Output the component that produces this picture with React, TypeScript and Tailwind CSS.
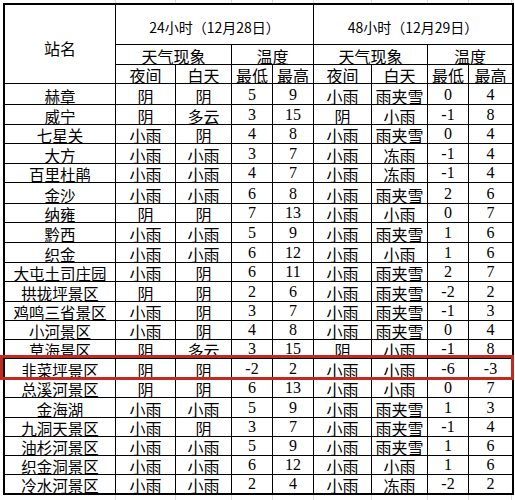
const cols = "grid-cols-[111px_60px_56px_41px_41px_58px_56px_41px_43px]";
const gridCols = ["w-[111px]", "w-[60px]", "w-[56px]", "w-[41px]", "w-[41px]", "w-[58px]", "w-[56px]", "w-[41px]", "w-[43px]"];

// name, night, day, low, high, night, day, low, high, row height
const rows: string[][] = [
  ["赫章", "阴", "阴", "5", "9", "小雨", "雨夹雪", "0", "4", "h-[21px]"],
  ["威宁", "阴", "多云", "3", "15", "阴", "小雨", "-1", "8", "h-[20px]"],
  ["七星关", "小雨", "阴", "4", "8", "小雨", "雨夹雪", "0", "4", "h-[19px]"],
  ["大方", "小雨", "小雨", "3", "7", "小雨", "冻雨", "-1", "4", "h-[20px]"],
  ["百里杜鹃", "小雨", "小雨", "4", "7", "小雨", "冻雨", "-1", "4", "h-[19px]"],
  ["金沙", "小雨", "小雨", "6", "8", "小雨", "雨夹雪", "2", "6", "h-[21px]"],
  ["纳雍", "阴", "阴", "7", "13", "小雨", "小雨", "0", "7", "h-[19px]"],
  ["黔西", "小雨", "小雨", "5", "9", "小雨", "雨夹雪", "1", "6", "h-[20px]"],
  ["织金", "小雨", "小雨", "6", "12", "小雨", "小雨", "1", "6", "h-[20px]"],
  ["大屯土司庄园", "小雨", "阴", "6", "11", "小雨", "雨夹雪", "2", "7", "h-[19px]"],
  ["拱拢坪景区", "阴", "阴", "2", "6", "小雨", "雨夹雪", "-2", "2", "h-[20px]"],
  ["鸡鸣三省景区", "小雨", "阴", "3", "7", "小雨", "雨夹雪", "-1", "3", "h-[19px]"],
  ["小河景区", "小雨", "阴", "4", "8", "小雨", "雨夹雪", "0", "4", "h-[19px]"],
  ["草海景区", "阴", "多云", "3", "15", "阴", "小雨", "-1", "8", "h-[19px]"],
  ["韭菜坪景区", "阴", "阴", "-2", "2", "小雨", "小雨", "-6", "-3", "h-[20px]"],
  ["总溪河景区", "阴", "阴", "6", "13", "小雨", "小雨", "0", "7", "h-[19px]"],
  ["金海湖", "小雨", "小雨", "5", "9", "小雨", "雨夹雪", "1", "3", "h-[20px]"],
  ["九洞天景区", "小雨", "阴", "3", "7", "小雨", "雨夹雪", "-1", "4", "h-[19px]"],
  ["油杉河景区", "小雨", "小雨", "5", "9", "小雨", "雨夹雪", "1", "6", "h-[19px]"],
  ["织金洞景区", "小雨", "小雨", "6", "12", "小雨", "小雨", "1", "6", "h-[19px]"],
  ["冷水河景区", "小雨", "小雨", "2", "4", "小雨", "冻雨", "-2", "2", "h-[18px]"],
];

const numCols = [3, 4, 7, 8];

function GridStrip({ h }: { h: string }) {
  return (
    <div className={`flex pl-[5px] ${h}`}>
      {gridCols.map((w, i) => (
        <div key={i} className={`${w} shrink-0 border-r border-[#dadada]`} />
      ))}
    </div>
  );
}

export default function App() {
  const base = "flex justify-center leading-none border-black";
  const bottom = `${base} items-end`;
  const middle = `${base} items-center`;
  return (
    <div className="relative w-[515px] h-[500px] overflow-hidden bg-white text-[16px] text-black font-['Noto_Sans_CJK_SC',sans-serif]">
      <GridStrip h="h-[3px]" />

      <div className="ml-[3px] w-[511px] border-2 border-black">
        {/* Header */}
        <div className={`grid ${cols} grid-rows-[40px_20px_19px]`}>
          <div className={`${middle} row-span-3 pt-2 border-r border-b`}>站名</div>
          <div className={`${middle} col-span-4 pt-1 text-[14px] border-r border-b`}>24小时（12月28日）</div>
          <div className={`${middle} col-span-4 pt-1 text-[14px] border-b`}>48小时（12月29日）</div>
          <div className={`${bottom} col-span-2 border-r border-b`}>天气现象</div>
          <div className={`${bottom} col-span-2 border-r border-b`}>温度</div>
          <div className={`${bottom} col-span-2 border-r border-b`}>天气现象</div>
          <div className={`${bottom} col-span-2 border-b`}>温度</div>
          {["夜间", "白天", "最低", "最高", "夜间", "白天", "最低", "最高"].map((t, i) => (
            <div key={i} className={`${bottom} border-b ${i < 7 ? "border-r" : ""}`}>{t}</div>
          ))}
        </div>

        {/* Rows */}
        {rows.map((r, ri) => (
          <div key={ri} className={`grid ${cols} ${r[9]}`}>
            {r.slice(0, 9).map((v, ci) => (
              <div
                key={ci}
                className={`${bottom} ${ci < 8 ? "border-r" : ""} ${ri < rows.length - 1 ? "border-b" : ""} ${
                  numCols.includes(ci) ? "font-['Liberation_Serif','Noto_Sans_CJK_SC',serif] pb-[1px]" : ""
                } ${ci === 0 ? "text-[15.5px]" : ""}`}
              >
                {v}
              </div>
            ))}
          </div>
        ))}
      </div>

      <GridStrip h="h-[5px]" />

      {/* highlight box */}
      <div className="absolute left-0 top-[355px] w-[514px] h-[25px] border-[3px] border-[#c22a1f]" />
    </div>
  );
}
